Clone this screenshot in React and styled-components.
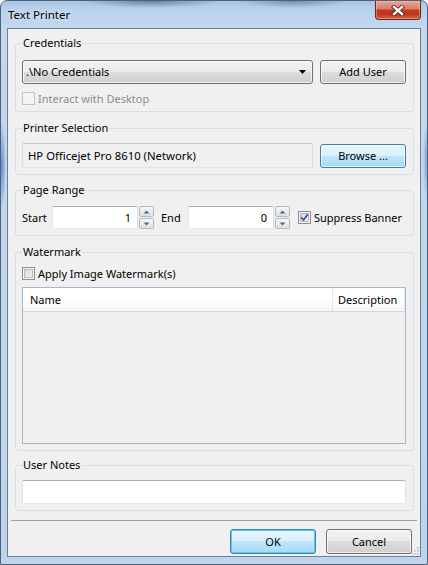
import React from 'react';
import styled, { createGlobalStyle } from 'styled-components';

const GlobalStyle = createGlobalStyle`
  html, body {
    margin: 0;
    padding: 0;
    background: #ffffff;
  }
  body {
    font-family: "Noto Sans", "Open Sans", sans-serif;
    font-size: 11px;
    color: #000;
  }
`;

const Window = styled.div`
  box-sizing: border-box;
  width: 428px;
  height: 565px;
  display: flex;
  flex-direction: column;
  border: 1px solid #4f6177;
  border-radius: 7px 7px 0 0;
  overflow: hidden;
  background:
    radial-gradient(ellipse 70px 7px at 150px 0px, rgba(60, 72, 92, 0.55), transparent),
    radial-gradient(ellipse 55px 7px at 292px 0px, rgba(60, 72, 92, 0.45), transparent),
    radial-gradient(ellipse 4px 45px at 1px 165px, rgba(70, 120, 190, 0.75), transparent),
    radial-gradient(ellipse 4px 40px at 426px 160px, rgba(70, 120, 190, 0.6), transparent),
    linear-gradient(180deg, #a9c5e5 0px, #b8d1ec 9px, #c3d8ef 27px, #bed4ec 100%);
`;

const TitleBar = styled.div`
  height: 27px;
  flex: none;
  display: flex;
  align-items: flex-start;
  padding-left: 7px;
`;

const Title = styled.div`
  padding-top: 6px;
  line-height: 16px;
  font-size: 11.5px;
  color: #000;
  text-shadow: 0 0 6px rgba(255, 255, 255, 0.9);
`;

const CloseButton = styled.div`
  margin-left: auto;
  margin-right: 6px;
  box-sizing: border-box;
  width: 46px;
  height: 19px;
  border: 1px solid #5e2a22;
  border-top: none;
  border-radius: 0 0 4px 4px;
  display: flex;
  align-items: center;
  justify-content: center;
  background: linear-gradient(180deg, #e8a597 0%, #d9806d 42%, #c33a23 52%, #c0341d 72%, #d45f47 100%);
  box-shadow: inset 0 0 0 1px rgba(255, 200, 190, 0.45);
`;

const Client = styled.div`
  position: relative;
  flex: 1;
  display: flex;
  flex-direction: column;
  margin: 0 6px 7px 6px;
  border: 1px solid #6f7f92;
  background: #f0f0f0;
`;

const Body = styled.div`
  display: flex;
  flex-direction: column;
  padding: 6px 6px 0 7px;
`;

const Group = styled.fieldset`
  margin: ${p => p.$mt || 0}px 0 0 0;
  padding: ${p => p.$pt || 7}px 7px 6px 6px;
  border: 1px solid #d5dfe5;
  border-radius: 3px;
  min-width: 0;
  display: flex;
  flex-direction: column;
  gap: ${p => p.$gap || 0}px;
`;

const Legend = styled.legend`
  padding: 0 1px;
  margin: 0;
  line-height: 16px;
  color: #000;
`;

const Row = styled.div`
  display: flex;
  align-items: center;
  gap: ${p => p.$gap || 0}px;
`;

const PushButton = styled.div`
  box-sizing: border-box;
  width: 86px;
  height: ${p => p.$h || 24}px;
  flex: none;
  display: flex;
  align-items: center;
  justify-content: center;
  border: 1px solid ${p => (p.$hot ? '#3c7fb1' : '#707070')};
  border-radius: 3px;
  background: ${p =>
    p.$hot
      ? 'linear-gradient(180deg, #eaf6fd 0%, #d9f0fc 50%, #bee6fd 50%, #a7d9f5 100%)'
      : 'linear-gradient(180deg, #f2f2f2 0%, #ebebeb 50%, #dddddd 50%, #cfcfcf 100%)'};
  box-shadow: inset 0 0 0 1px ${p => (p.$focus ? '#56cdf8' : 'rgba(255, 255, 255, 0.7)')};
  line-height: 16px;
`;

const Combo = styled.div`
  box-sizing: border-box;
  flex: 1;
  height: 24px;
  display: flex;
  align-items: center;
  padding: 0 6px 0 3px;
  border: 1px solid #707070;
  border-radius: 3px;
  background: linear-gradient(180deg, #f2f2f2 0%, #ebebeb 50%, #dddddd 50%, #cfcfcf 100%);
  box-shadow: inset 0 0 0 1px rgba(255, 255, 255, 0.7);
`;

const ComboText = styled.span`
  flex: 1;
  line-height: 16px;
`;

const TextBox = styled.div`
  box-sizing: border-box;
  flex: ${p => (p.$w ? 'none' : '1 1 auto')};
  width: ${p => (p.$w ? `${p.$w}px` : 'auto')};
  height: ${p => p.$h || 23}px;
  display: flex;
  align-items: center;
  justify-content: ${p => (p.$right ? 'flex-end' : 'flex-start')};
  padding: 0 ${p => (p.$right ? 6 : 5)}px;
  border: 1px solid;
  border-color: ${p =>
    p.$readOnly ? '#c6c8cd #dcdde1 #e3e4e7 #dcdde1' : '#abadb3 #dbdfe6 #e3e9ef #e2e3ea'};
  border-radius: 2px;
  background: ${p => (p.$readOnly ? '#f0f0f0' : '#ffffff')};
  line-height: 16px;
  font-size: ${p => (p.$readOnly ? '11.3px' : '11px')};
`;

const Label = styled.span`
  flex: none;
  width: ${p => (p.$w ? `${p.$w}px` : 'auto')};
  margin-left: ${p => p.$ml || 0}px;
  line-height: 16px;
  color: ${p => (p.$disabled ? '#8d8d8d' : '#000')};
`;

const SpinBox = styled.div`
  flex: none;
  width: 15px;
  height: 23px;
  margin-left: 1px;
  display: flex;
  flex-direction: column;
  gap: 1px;
`;

const SpinButton = styled.div`
  box-sizing: border-box;
  flex: 1;
  display: flex;
  align-items: center;
  justify-content: center;
  border: 1px solid #b5b8bd;
  border-radius: 2px;
  background: linear-gradient(180deg, #f7f7f7 0%, #ececec 50%, #e0e0e0 100%);
`;

const CheckBox = styled.span`
  box-sizing: border-box;
  flex: none;
  width: 13px;
  height: 13px;
  display: flex;
  align-items: center;
  justify-content: center;
  border: 1px solid ${p => (p.$disabled ? '#c4c4c4' : '#8e8f8f')};
  background: ${p =>
    p.$disabled ? '#f4f4f4' : 'linear-gradient(135deg, #c9cdd3 0%, #e6e7e9 50%, #f8f8f8 100%)'};
  box-shadow: ${p =>
    p.$disabled ? 'none' : 'inset 0 0 0 1px #f4f4f4, inset 0 0 0 2px #b9bdc2'};
`;

const CheckRow = styled.div`
  display: flex;
  align-items: center;
  gap: 3px;
  height: 13px;
  margin-left: ${p => p.$ml || 0}px;
`;

const ListView = styled.div`
  box-sizing: border-box;
  height: 157px;
  display: flex;
  flex-direction: column;
  border: 1px solid #a7b7cd;
  background: #f0f0f0;
`;

const ListHeader = styled.div`
  box-sizing: border-box;
  height: 24px;
  display: flex;
  border-bottom: 1px solid #d5d5d5;
  background: linear-gradient(180deg, #ffffff 0%, #ffffff 45%, #f5f6f7 100%);
`;

const HeaderCell = styled.div`
  box-sizing: border-box;
  flex: ${p => (p.$w ? 'none' : '1')};
  width: ${p => (p.$w ? `${p.$w}px` : 'auto')};
  display: flex;
  align-items: center;
  padding-left: ${p => p.$pl || 6}px;
  border-right: 1px solid #e3e8ee;
  line-height: 16px;
`;

const Separator = styled.div`
  height: 1px;
  margin: 9px 3px 0 3px;
  background: #a0a0a0;
`;

const Footer = styled.div`
  display: flex;
  justify-content: flex-end;
  gap: 10px;
  padding: 8px 8px 0 0;
`;

const Grip = styled.svg`
  position: absolute;
  right: 1px;
  bottom: 1px;
`;

const Arrow = ({ up }) => (
  <svg width="7" height="4" viewBox="0 0 7 4">
    <path d={up ? 'M0.5 3.5 L3.5 0.5 L6.5 3.5 Z' : 'M0.5 0.5 L3.5 3.5 L6.5 0.5 Z'} fill="#4e6a96" />
  </svg>
);

const Spinner = () => (
  <SpinBox>
    <SpinButton>
      <Arrow up />
    </SpinButton>
    <SpinButton>
      <Arrow />
    </SpinButton>
  </SpinBox>
);

const Check = ({ checked, disabled }) => (
  <CheckBox $disabled={disabled}>
    {checked && (
      <svg width="9" height="9" viewBox="0 0 9 9">
        <path d="M1.2 4.4 L3.6 7 L7.8 1.2" fill="none" stroke="#3d5297" strokeWidth="1.7" />
      </svg>
    )}
  </CheckBox>
);

export default function App() {
  return (
    <>
      <GlobalStyle />
      <Window>
        <TitleBar>
          <Title>Text Printer</Title>
          <CloseButton>
            <svg width="14" height="11" viewBox="0 0 14 11">
              <path d="M3 2 L11 9 M11 2 L3 9" stroke="#5a1e16" strokeWidth="4.2" strokeLinecap="square" />
              <path d="M3 2 L11 9 M11 2 L3 9" stroke="#ffffff" strokeWidth="2.4" strokeLinecap="square" />
            </svg>
          </CloseButton>
        </TitleBar>
        <Client>
          <Body>
            <Group $pt={9} $gap={8}>
              <Legend>Credentials</Legend>
              <Row $gap={7}>
                <Combo>
                  <ComboText>.\No Credentials</ComboText>
                  <svg width="7" height="4" viewBox="0 0 7 4">
                    <path d="M0 0 L7 0 L3.5 4 Z" fill="#000" />
                  </svg>
                </Combo>
                <PushButton>Add User</PushButton>
              </Row>
              <CheckRow>
                <Check disabled />
                <Label $disabled>Interact with Desktop</Label>
              </CheckRow>
            </Group>

            <Group $mt={8}>
              <Legend>Printer Selection</Legend>
              <Row $gap={7}>
                <TextBox $readOnly $h={25}>HP Officejet Pro 8610 (Network)</TextBox>
                <PushButton $hot>Browse ...</PushButton>
              </Row>
            </Group>

            <Group $mt={7} $pt={8}>
              <Legend>Page Range</Legend>
              <Row>
                <Label $w={30}>Start</Label>
                <TextBox $w={86} $right>1</TextBox>
                <Spinner />
                <Label $w={27} $ml={7}>End</Label>
                <TextBox $w={86} $right>0</TextBox>
                <Spinner />
                <CheckRow $ml={8}>
                  <Check checked />
                  <Label>Suppress Banner</Label>
                </CheckRow>
              </Row>
            </Group>

            <Group $mt={8} $gap={7}>
              <Legend>Watermark</Legend>
              <CheckRow>
                <Check />
                <Label>Apply Image Watermark(s)</Label>
              </CheckRow>
              <ListView>
                <ListHeader>
                  <HeaderCell $pl={7}>Name</HeaderCell>
                  <HeaderCell $w={72} $pl={5}>Description</HeaderCell>
                </ListHeader>
              </ListView>
            </Group>

            <Group $mt={6}>
              <Legend>User Notes</Legend>
              <TextBox $h={24} />
            </Group>
          </Body>
          <Separator />
          <Footer>
            <PushButton $hot $focus $h={25}>OK</PushButton>
            <PushButton $h={25}>Cancel</PushButton>
          </Footer>
          <Grip width="9" height="9" viewBox="0 0 9 9">
            {[
              [7, 1], [4, 4], [7, 4], [1, 7], [4, 7], [7, 7],
            ].map(([x, y]) => (
              <rect key={`${x}-${y}`} x={x} y={y} width="1.5" height="1.5" fill="#b0b0b0" />
            ))}
          </Grip>
        </Client>
      </Window>
    </>
  );
}
